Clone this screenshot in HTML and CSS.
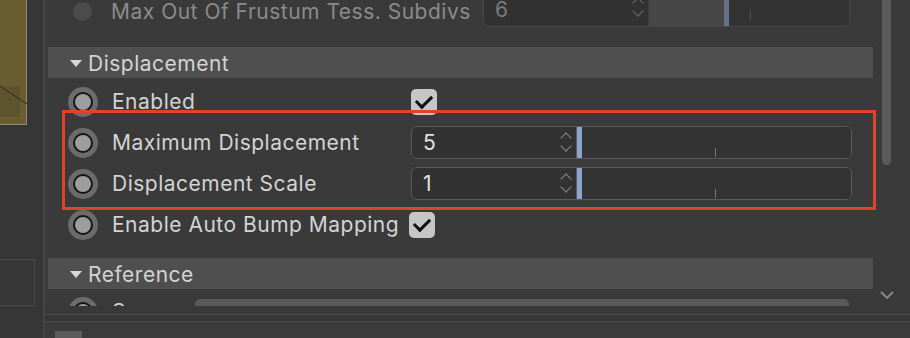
FILE: index.html
```html
<!DOCTYPE html>
<html lang="en">
<head>
    <meta charset="UTF-8">
    <title>Attribute Editor - Displacement</title>
    <link rel="stylesheet" href="styles.css">
</head>
<body>
    <div class="app">
        <div class="sidebar">
            <div class="viewport">
                <svg width="27" height="125" viewBox="0 0 27 125">
                    <rect x="0" y="86" width="20" height="31" fill="#5d532f"/>
                    <line x1="0" y1="86" x2="27" y2="104" stroke="#2c2a22" stroke-width="1"/>
                </svg>
            </div>
            <div class="outliner"></div>
        </div>

        <div class="main">
            <div class="editor">
                <div class="scroll">
                    <div class="row dimmed">
                        <span class="radio off"></span>
                        <span class="label">Max Out Of Frustum Tess. Subdivs</span>
                        <div class="field wide">
                            <div class="number">6<span class="stepper"></span></div>
                            <div class="slider">
                                <div class="fill"></div>
                                <div class="thumb"></div>
                                <div class="tick"></div>
                            </div>
                        </div>
                    </div>

                    <div class="section">
                        <span class="caret"></span>Displacement
                    </div>

                    <div class="row">
                        <span class="radio"></span>
                        <span class="label">Enabled</span>
                        <span class="check"></span>
                    </div>
                    <div class="row">
                        <span class="radio"></span>
                        <span class="label">Maximum Displacement</span>
                        <div class="field">
                            <div class="number">5<span class="stepper"></span></div>
                            <div class="slider">
                                <div class="thumb"></div>
                                <div class="tick"></div>
                            </div>
                        </div>
                    </div>
                    <div class="row">
                        <span class="radio"></span>
                        <span class="label">Displacement Scale</span>
                        <div class="field">
                            <div class="number">1<span class="stepper"></span></div>
                            <div class="slider">
                                <div class="thumb"></div>
                                <div class="tick"></div>
                            </div>
                        </div>
                    </div>
                    <div class="row">
                        <span class="radio"></span>
                        <span class="label short">Enable Auto Bump Mapping</span>
                        <span class="check"></span>
                    </div>

                    <div class="section gap">
                        <span class="caret"></span>Reference
                    </div>

                    <div class="row">
                        <span class="radio"></span>
                        <span class="label source">Source</span>
                        <div class="dropdown">Auto</div>
                    </div>
                </div>

                <div class="scrollbar">
                    <div class="scroll-thumb"></div>
                    <svg class="scroll-down" width="14" height="9" viewBox="0 0 14 9">
                        <polyline points="1,1 7,7 13,1" fill="none" stroke="#8a8a8a" stroke-width="1.8"/>
                    </svg>
                </div>

                <div class="highlight"></div>
            </div>

            <div class="lower">
                <span class="swatch"></span>
            </div>
        </div>
    </div>
</body>
</html>
```

FILE: styles.css
```css
body {
    margin: 0;
    background-color: #3a3a3a;
    font-family: Inter, "Liberation Sans", sans-serif;
    font-size: 21px;
    letter-spacing: 0.5px;
    color: #d3d3d3;
    overflow: hidden;
}
.app {
    display: flex;
    width: 910px;
    height: 338px;
}
.sidebar {
    width: 43px;
    flex-shrink: 0;
    background-color: #363636;
    border-right: 2px solid #444;
}
.viewport {
    width: 27px;
    height: 125px;
    background-color: #6a5e31;
    border-right: 1px solid #948c6c;
    border-bottom: 1px solid #948c6c;
    box-sizing: border-box;
}
.viewport svg {
    display: block;
}
.outliner {
    margin-top: 134px;
    width: 35px;
    height: 47px;
    border-top: 1px solid #4a4a4a;
    border-right: 1px solid #4a4a4a;
    border-bottom: 1px solid #4a4a4a;
    box-sizing: border-box;
}
.main {
    flex: 1;
    display: flex;
    flex-direction: column;
    border-right: 2px solid #8c8c8c;
    margin-right: 3px;
}
.editor {
    position: relative;
    height: 306px;
    overflow: hidden;
    display: flex;
    border-bottom: 4px solid #383838;
}
.scroll {
    width: 825px;
    margin-left: 3px;
    margin-top: -9px;
}
.row {
    height: 41px;
    display: flex;
    align-items: center;
}
.radio {
    width: 30px;
    height: 30px;
    margin-left: 20px;
    border-radius: 50%;
    background-color: #6c6c6c;
    display: flex;
    align-items: center;
    justify-content: center;
    flex-shrink: 0;
}
.radio::after {
    content: "";
    width: 16px;
    height: 16px;
    border-radius: 50%;
    border: 2px solid #151515;
    background-color: #9d9d9d;
}
.radio.off {
    background-color: #4b4b4b;
    width: 19px;
    height: 19px;
    margin-left: 25px;
    margin-right: 5px;
}
.radio.off::after {
    display: none;
}
.label {
    margin-left: 14px;
    width: 299px;
    white-space: nowrap;
    flex-shrink: 0;
}
.dimmed .label {
    color: #8b8b8b;
    width: 372px;
}
.label.short {
    width: 287px;
    margin-right: 10px;
}
.label.source {
    width: 68px;
}
.check {
    width: 26px;
    height: 26px;
    border-radius: 5px;
    background-color: #c6c6c6;
    position: relative;
}
.check::after {
    content: "";
    position: absolute;
    left: 8px;
    top: 3px;
    width: 7px;
    height: 13px;
    border-right: 3px solid #111;
    border-bottom: 3px solid #111;
    transform: rotate(45deg);
}
.field {
    width: 441px;
    height: 33px;
    display: flex;
    border: 1px solid #5a5a5a;
    border-radius: 6px;
    box-sizing: border-box;
    background-color: #323232;
    overflow: hidden;
}
.field.wide {
    width: 367px;
    height: 36px;
    margin-top: -6px;
    border-color: #474747;
}
.number {
    width: 165px;
    flex-shrink: 0;
    border-right: 1px solid #5a5a5a;
    padding-left: 11px;
    box-sizing: border-box;
    line-height: 31px;
    color: #e2e2e2;
    position: relative;
}
.dimmed .number {
    color: #7c7c7c;
    border-right-color: #3e3e3e;
    line-height: 36px;
}
.stepper {
    position: absolute;
    right: 3px;
    top: 5px;
    width: 14px;
    height: 22px;
}
.stepper::before,
.stepper::after {
    content: "";
    position: absolute;
    left: 3px;
    width: 7px;
    height: 7px;
    border-left: 1.5px solid #888;
    border-top: 1.5px solid #888;
}
.stepper::before {
    top: 2px;
    transform: rotate(45deg);
}
.stepper::after {
    top: 10px;
    transform: rotate(225deg);
}
.dimmed .stepper::before,
.dimmed .stepper::after {
    border-color: #6a6a6a;
}
.slider {
    flex: 1;
    position: relative;
    background-color: #333;
}
.fill {
    position: absolute;
    left: 0;
    top: 0;
    bottom: 0;
    width: 75px;
    background-color: #474747;
}
.thumb {
    position: absolute;
    left: 0;
    top: 0;
    bottom: 0;
    width: 5px;
    background-color: #8aa3cf;
}
.dimmed .thumb {
    left: 75px;
    background-color: #66738c;
}
.tick {
    position: absolute;
    left: 138px;
    bottom: 1px;
    width: 1px;
    height: 9px;
    background-color: #777;
}
.dimmed .tick {
    left: 101px;
    bottom: 6px;
    background-color: #555;
}
.section {
    height: 31px;
    margin-top: 15px;
    margin-bottom: 3px;
    background-color: #4f4f4f;
    display: flex;
    align-items: center;
    padding-left: 22px;
    padding-top: 2px;
    box-sizing: border-box;
}
.section.gap {
    margin-top: 13px;
    margin-bottom: 2px;
}
.caret {
    width: 0;
    height: 0;
    border-left: 6px solid transparent;
    border-right: 6px solid transparent;
    border-top: 7px solid #d8d8d8;
    margin-right: 6px;
}
.dropdown {
    margin-left: 15px;
    width: 654px;
    height: 33px;
    margin-top: 8px;
    border-radius: 5px;
    background-color: #5a5a5a;
    padding-left: 26px;
    box-sizing: border-box;
    line-height: 33px;
}
.scrollbar {
    position: relative;
    width: 40px;
}
.scroll-thumb {
    margin-left: 9px;
    width: 9px;
    height: 165px;
    border-radius: 0 0 5px 5px;
    background-color: #5b5b5b;
}
.scroll-down {
    position: absolute;
    left: 7px;
    top: 291px;
}
.highlight {
    position: absolute;
    left: 17px;
    top: 110px;
    width: 814px;
    height: 100px;
    border: 3px solid #e2412a;
    box-sizing: border-box;
}
.lower {
    flex: 1;
    border-top: 1px solid #4b4b4b;
    margin-top: 4px;
    background-color: #3b3b3b;
    box-shadow: inset 0 6px 0 #363636, inset 0 7px 0 #4b4b4b;
    position: relative;
}
.swatch {
    position: absolute;
    left: 10px;
    top: 16px;
    width: 27px;
    height: 10px;
    background-color: #5c5c5c;
}
```
